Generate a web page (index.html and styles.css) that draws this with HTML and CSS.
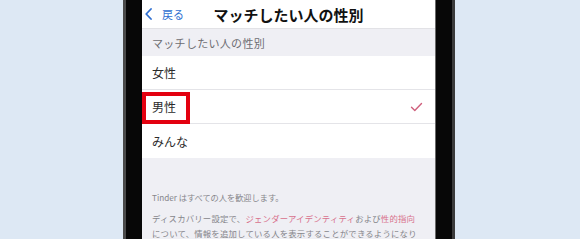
FILE: index.html
```html
<!DOCTYPE html>
<html lang="ja">
<head>
<meta charset="utf-8">
<link rel="stylesheet" href="styles.css">
</head>
<body>
<div class="page">
  <div class="phone">
    <div class="screen">
      <div class="nav">
        <div class="back">
          <svg class="chev" width="7" height="12" viewBox="0 0 7 12"><path d="M6 1 L1.2 6 L6 11" fill="none" stroke="#2f6fd1" stroke-width="1.8" stroke-linecap="round" stroke-linejoin="round"/></svg>
          <span>戻る</span>
        </div>
        <div class="title">マッチしたい人の性別</div>
      </div>
      <div class="section-head">マッチしたい人の性別</div>
      <div class="list">
        <div class="row">女性</div>
        <div class="row selected">男性
          <span class="highlight"></span>
          <svg class="check" width="13" height="10" viewBox="0 0 13 10"><path d="M1.5 5.2 L4.8 8.5 L11.5 1.5" fill="none" stroke="#cf5f7c" stroke-width="1.4" stroke-linecap="round" stroke-linejoin="round"/></svg>
        </div>
        <div class="row last">みんな</div>
      </div>
      <div class="footer">
        <p class="l1">Tinder はすべての人を歓迎します。</p>
        <p class="l2">ディスカバリー設定で、<span class="pink">ジェンダーアイデンティティ</span>および<span class="pink">性的指向</span><br>について、情報を追加している人を表示することができるようになり</p>
      </div>
    </div>
  </div>
</div>
</body>
</html>
```
FILE: styles.css
```css
html, body {
  margin: 0;
  padding: 0;
}
body {
  background: #dde8f4;
  font-family: "Noto Sans CJK JP", "Noto Sans", sans-serif;
  width: 580px;
  height: 239px;
  overflow: hidden;
}
.page {
  display: flex;
  height: 239px;
  padding-left: 123px;
}
.phone {
  width: 294px;
  height: 239px;
  background: #070707;
  border-left: 3px solid #4a4a4a;
  border-right: 3px solid #3a3a3a;
  padding: 0 16px;
  box-sizing: content-box;
  display: flex;
}
.screen {
  width: 294px;
  height: 239px;
  background: #efeff4;
  display: flex;
  flex-direction: column;
  border-right: 1px solid #6a6a6a;
  box-sizing: border-box;
  overflow: hidden;
}
.nav {
  flex-shrink: 0;
  height: 29px;
  background: #ffffff;
  border-bottom: 1px solid #e2e2e6;
  box-sizing: border-box;
  display: flex;
  align-items: center;
  position: relative;
}
.back {
  display: flex;
  align-items: center;
  gap: 10px;
  padding-left: 3px;
  color: #2f6fd1;
  font-size: 11px;
  width: 60px;
}
.chev {
  display: block;
}
.title {
  position: absolute;
  left: 0;
  right: 0;
  text-align: center;
  font-size: 15px;
  font-weight: 700;
  color: #111;
  pointer-events: none;
}
.section-head {
  flex-shrink: 0;
  height: 27px;
  display: flex;
  align-items: center;
  padding-left: 10px;
  font-size: 11px;
  letter-spacing: 0.3px;
  color: #6d6d72;
}
.list {
  flex-shrink: 0;
  background: #ffffff;
  display: flex;
  flex-direction: column;
}
.row {
  flex-shrink: 0;
  height: 34px;
  display: flex;
  align-items: center;
  padding-left: 10px;
  font-size: 12px;
  color: #2a2a2a;
  border-bottom: 1px solid #e4e4e8;
  box-sizing: border-box;
  position: relative;
}
.row.last {
  border-bottom: none;
}
.highlight {
  position: absolute;
  left: 0;
  top: 2px;
  width: 48px;
  height: 32px;
  border: 4px solid #e3000f;
  box-sizing: border-box;
}
.check {
  position: absolute;
  right: 12px;
  top: 12px;
}
.footer {
  flex-shrink: 0;
  padding: 32px 10px 0 10px;
  color: #86868b;
}
.footer p {
  margin: 0;
  white-space: nowrap;
}
.l1 {
  font-size: 8.2px;
  line-height: 14px;
}
.l2 {
  margin-top: 7px !important;
  font-size: 8.4px;
  letter-spacing: 0.2px;
  line-height: 15px;
}
.pink {
  color: #d8718c;
}
```
